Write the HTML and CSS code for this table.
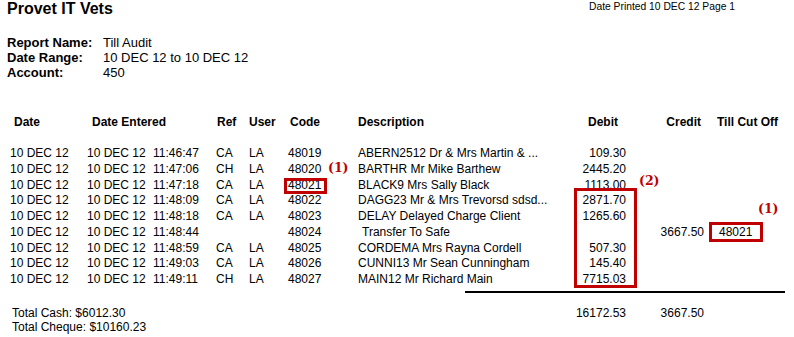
FILE: index.html
```html
<!DOCTYPE html>
<html>
<head>
<meta charset="utf-8">
<link rel="stylesheet" href="styles.css">
</head>
<body>
<div class="page">
  <div class="top">
    <div class="title">Provet IT Vets</div>
    <div class="printed">Date Printed 10 DEC 12 Page 1</div>
  </div>
  <div class="meta">
    <div class="lbl">Report Name:</div><div>Till Audit</div>
    <div class="lbl">Date Range:</div><div>10 DEC 12 to 10 DEC 12</div>
    <div class="lbl">Account:</div><div>450</div>
  </div>
  <div class="grid head">
    <div class="h-date">Date</div>
    <div class="h-entered">Date Entered</div>
    <div class="h-ref">Ref</div>
    <div>User</div>
    <div class="h-code">Code</div>
    <div>Description</div>
    <div class="num h-debit">Debit</div>
    <div class="num h-credit">Credit</div>
    <div class="h-till">Till Cut Off</div>
  </div>
  <div class="grid rows">
    <div>10 DEC 12</div><div>10 DEC 12</div><div>11:46:47</div><div>CA</div><div>LA</div><div>48019</div><div>ABERN2512 Dr &amp; Mrs Martin &amp; ...</div><div class="num">109.30</div><div class="num"></div><div class="till"></div>
    <div>10 DEC 12</div><div>10 DEC 12</div><div>11:47:06</div><div>CH</div><div>LA</div><div>48020</div><div>BARTHR Mr Mike Barthew</div><div class="num">2445.20</div><div class="num"></div><div class="till"></div>
    <div>10 DEC 12</div><div>10 DEC 12</div><div>11:47:18</div><div>CA</div><div>LA</div><div>48021</div><div>BLACK9 Mrs Sally Black</div><div class="num">1113.00</div><div class="num"></div><div class="till"></div>
    <div>10 DEC 12</div><div>10 DEC 12</div><div>11:48:09</div><div>CA</div><div>LA</div><div>48022</div><div>DAGG23 Mr &amp; Mrs Trevorsd sdsd...</div><div class="num">2871.70</div><div class="num"></div><div class="till"></div>
    <div>10 DEC 12</div><div>10 DEC 12</div><div>11:48:18</div><div>CA</div><div>LA</div><div>48023</div><div>DELAY Delayed Charge Client</div><div class="num">1265.60</div><div class="num"></div><div class="till"></div>
    <div>10 DEC 12</div><div>10 DEC 12</div><div>11:48:44</div><div></div><div></div><div>48024</div><div class="indent">Transfer To Safe</div><div class="num"></div><div class="num">3667.50</div><div class="till">48021</div>
    <div>10 DEC 12</div><div>10 DEC 12</div><div>11:48:59</div><div>CA</div><div>LA</div><div>48025</div><div>CORDEMA Mrs Rayna Cordell</div><div class="num">507.30</div><div class="num"></div><div class="till"></div>
    <div>10 DEC 12</div><div>10 DEC 12</div><div>11:49:03</div><div>CA</div><div>LA</div><div>48026</div><div>CUNNI13 Mr Sean Cunningham</div><div class="num">145.40</div><div class="num"></div><div class="till"></div>
    <div>10 DEC 12</div><div>10 DEC 12</div><div>11:49:11</div><div>CH</div><div>LA</div><div>48027</div><div>MAIN12 Mr Richard Main</div><div class="num">7715.03</div><div class="num"></div><div class="till"></div>
  </div>
  <div class="rule"></div>
  <div class="grid totals">
    <div class="sums">
      <div>Total Cash: $6012.30</div>
      <div>Total Cheque: $10160.23</div>
    </div>
    <div class="num">16172.53</div>
    <div class="num">3667.50</div>
  </div>

  <div class="mark box-code"></div>
  <div class="mark box-debit"></div>
  <div class="mark box-till"></div>
  <span class="note note-code">(1)</span>
  <span class="note note-debit">(2)</span>
  <span class="note note-till">(1)</span>
</div>
</body>
</html>
```

FILE: styles.css
```css
* { box-sizing: border-box; }
html, body { margin: 0; padding: 0; background: #fff; }
body {
  font-family: "Liberation Sans", Arial, sans-serif;
  color: #000;
  width: 794px;
  height: 337px;
  overflow: hidden;
}
.page { position: relative; width: 794px; height: 337px; }

.top {
  display: grid;
  grid-template-columns: 582px auto;
  padding-left: 7px;
  align-items: start;
}
.title { font-size: 16px; font-weight: bold; line-height: 18px; }
.printed { font-size: 10.3px; line-height: 12px; margin-top: 1px; }

.meta {
  display: grid;
  grid-template-columns: 96px auto;
  padding-left: 7px;
  margin-top: 17px;
  font-size: 13px;
  line-height: 15px;
}
.meta .lbl { font-weight: bold; }

.grid {
  display: grid;
  grid-template-columns: 77px 66px 63px 33px 39px 70px 202px 66px 78px 1fr;
  padding-left: 10px;
  font-size: 12px;
}
.head {
  font-weight: bold;
  line-height: 16px;
  margin-top: 34px;
}
.h-date { padding-left: 4px; }
.h-entered { grid-column: span 2; padding-left: 5px; }
.h-ref { padding-left: 1px; }
.h-code { padding-left: 2px; }
.h-debit { padding-right: 8px; }
.h-credit { padding-right: 3px; }
.h-till { padding-left: 13px; }

.rows { line-height: 15.75px; margin-top: 16px; }
.num { text-align: right; }
.till { padding-left: 15px; }
.indent { padding-left: 4px; }

.rule {
  margin-top: 3px;
  margin-left: 465px;
  width: 320px;
  height: 2px;
  background: #000;
}

.totals { margin-top: 13px; line-height: 14px; }
.sums { grid-column: span 7; padding-left: 2px; }

.mark {
  position: absolute;
  border: 3px solid #c00000;
}
.box-code { left: 284px; top: 178px; width: 43px; height: 16px; }
.box-debit { left: 574px; top: 188px; width: 63px; height: 100px; }
.box-till { left: 709px; top: 222px; width: 54px; height: 20px; }

.note {
  position: absolute;
  font-family: "DejaVu Serif", serif;
  font-weight: bold;
  font-size: 12.5px;
  line-height: 14px;
  color: #c00000;
}
.note-code { left: 328px; top: 161px; }
.note-debit { left: 639px; top: 174px; }
.note-till { left: 758px; top: 202px; }
```
